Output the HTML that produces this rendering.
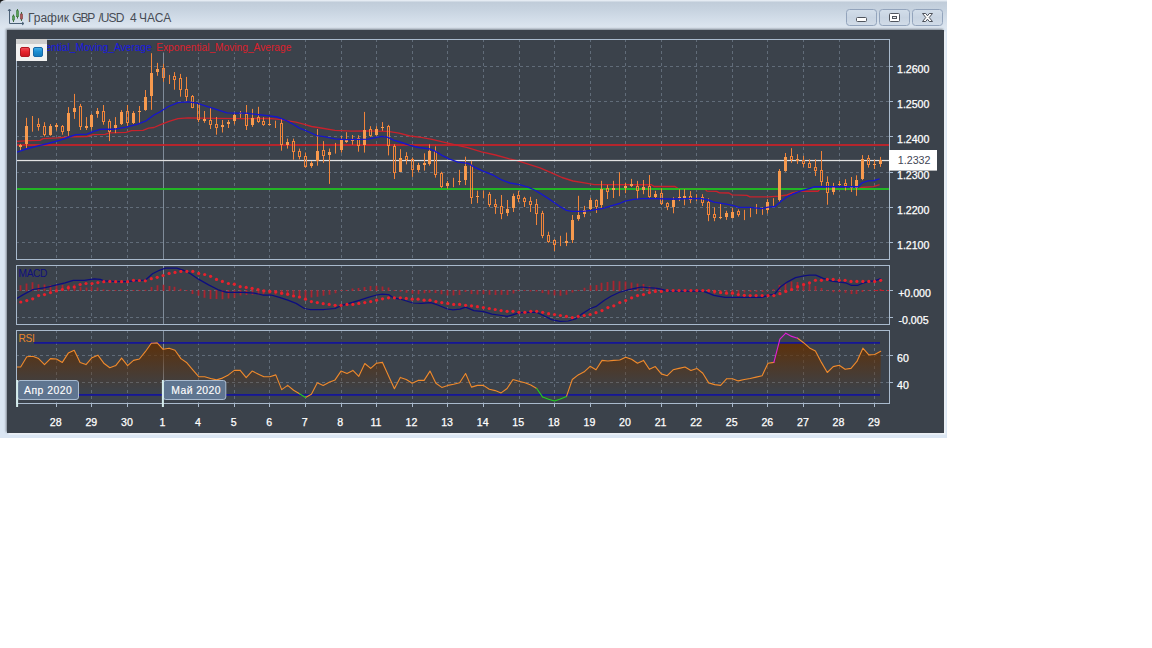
<!DOCTYPE html>
<html><head><meta charset="utf-8"><title>График GBP/USD</title>
<style>
html,body{margin:0;padding:0;background:#fff;width:1152px;height:648px;overflow:hidden;font-family:"Liberation Sans",sans-serif}
#win{position:absolute;left:0;top:0;width:947px;height:438px;background:linear-gradient(180deg,#e8eef5 0,#e2e9f1 1px,#c0ccd9 2px,#c6d2df 9px,#d1dce8 18px,#dde6f0 28px,#dbe6f3 31px,#dbe6f3 100%);border-radius:6px 0 0 0 / 4px 0 0 0;}
#corner{position:absolute;left:0;top:0;width:8px;height:6px;background:#141414}
#dark{position:absolute;left:7px;top:30px;width:936.5px;height:402.5px;background:#3b424b;box-shadow:-1px -1px 2px 0 rgba(60,66,74,.6), 1.5px 1.5px 0 0 #f4f8fc}
#title span{position:absolute;top:11.2px;font-size:12px;line-height:14px;color:#474c55;white-space:pre}
.btn{position:absolute;top:9px;height:15px;width:29px;border:1px solid #9aa6b5;border-radius:3px;background:linear-gradient(180deg,#dfe6ee,#c9d3de)}
</style></head><body>
<div id="corner"></div>
<div id="win"></div>
<div id="dark"></div>
<div id="title">
<span style="left:27.9px">График</span><span style="left:72.3px;letter-spacing:-1.2px">GBP</span><span style="left:98.4px;letter-spacing:-0.9px">/USD</span><span style="left:130px">4</span><span style="left:139px">ЧАСА</span>
</div>
<svg width="110" height="30" viewBox="840 0 110 30" style="position:absolute;left:840px;top:0">
<defs><linearGradient id="bg1" x1="0" y1="0" x2="0" y2="1"><stop offset="0" stop-color="#d3deea"/><stop offset="0.5" stop-color="#c8d4e2"/><stop offset="1" stop-color="#d2dce8"/></linearGradient></defs>
<g fill="url(#bg1)" stroke="#93a4bc" stroke-width="1">
<rect x="846.5" y="9.5" width="30" height="16" rx="3"/><rect x="879.5" y="9.5" width="30" height="16" rx="3"/><rect x="912.5" y="9.5" width="30" height="16" rx="3"/></g>
<rect x="856.5" y="17.5" width="10" height="4" rx="1" fill="#fff" stroke="#50555e" stroke-width="1"/>
<rect x="889.5" y="13.5" width="10" height="8" rx="1" fill="#fff" stroke="#50555e" stroke-width="1"/>
<rect x="892.5" y="16.5" width="4" height="2" fill="#e8e8e8" stroke="#50555e" stroke-width="1"/>
<path d="M922.5 13.5h3.2l1.8 2.3 1.8-2.3h3.2l-3.3 4 3.3 4h-3.2l-1.8-2.3-1.8 2.3h-3.2l3.3-4z" fill="#fff" stroke="#4c515a" stroke-width="1" stroke-linejoin="round"/>
</svg>
<svg width="20" height="20" viewBox="6 7 20 20" style="position:absolute;left:6px;top:7px">
<path d="M9.5 9.5V23.5H23.5" fill="none" stroke="#4a6076" stroke-width="1"/>
<path d="M8 11l1.5-2 1.5 2M22 22l2 1.5-2 1.5" fill="none" stroke="#4a6076" stroke-width="1"/>
<path d="M13.5 14.5V22M17.5 9V18.5M21.5 12V21" stroke="#3c6a3c" stroke-width="1" fill="none"/>
<rect x="12.5" y="16" width="2" height="4" fill="#58a058" stroke="#3a7a3a" stroke-width="0.6"/>
<rect x="16.5" y="10.7" width="2" height="6" fill="#58a058" stroke="#3a7a3a" stroke-width="0.6"/>
<rect x="20.5" y="14" width="2" height="5" fill="#b05858" stroke="#7a3a3a" stroke-width="0.6"/>
</svg>
<svg width="1152" height="648" viewBox="0 0 1152 648" style="position:absolute;left:0;top:0" font-family="Liberation Sans, sans-serif">
<defs>
<linearGradient id="rsifill" gradientUnits="userSpaceOnUse" x1="0" y1="343" x2="0" y2="393"><stop offset="0" stop-color="#603006" stop-opacity="0.92"/><stop offset="1" stop-color="#603006" stop-opacity="0"/></linearGradient>
<clipPath id="cm"><rect x="17" y="40" width="872" height="219"/></clipPath>
<clipPath id="crsi"><rect x="17" y="343" width="872" height="60"/></clipPath>
</defs>
<path d="M56.5 39.0V259.0M91.5 39.0V259.0M127.5 39.0V259.0M198.5 39.0V259.0M234.5 39.0V259.0M269.5 39.0V259.0M305.5 39.0V259.0M341.5 39.0V259.0M376.5 39.0V259.0M412.5 39.0V259.0M447.5 39.0V259.0M483.5 39.0V259.0M519.5 39.0V259.0M554.5 39.0V259.0M590.5 39.0V259.0M625.5 39.0V259.0M661.5 39.0V259.0M696.5 39.0V259.0M732.5 39.0V259.0M767.5 39.0V259.0M803.5 39.0V259.0M839.5 39.0V259.0M874.5 39.0V259.0M56.5 265.0V324.0M91.5 265.0V324.0M127.5 265.0V324.0M198.5 265.0V324.0M234.5 265.0V324.0M269.5 265.0V324.0M305.5 265.0V324.0M341.5 265.0V324.0M376.5 265.0V324.0M412.5 265.0V324.0M447.5 265.0V324.0M483.5 265.0V324.0M519.5 265.0V324.0M554.5 265.0V324.0M590.5 265.0V324.0M625.5 265.0V324.0M661.5 265.0V324.0M696.5 265.0V324.0M732.5 265.0V324.0M767.5 265.0V324.0M803.5 265.0V324.0M839.5 265.0V324.0M874.5 265.0V324.0M56.5 330.0V403.0M91.5 330.0V403.0M127.5 330.0V403.0M198.5 330.0V403.0M234.5 330.0V403.0M269.5 330.0V403.0M305.5 330.0V403.0M341.5 330.0V403.0M376.5 330.0V403.0M412.5 330.0V403.0M447.5 330.0V403.0M483.5 330.0V403.0M519.5 330.0V403.0M554.5 330.0V403.0M590.5 330.0V403.0M625.5 330.0V403.0M661.5 330.0V403.0M696.5 330.0V403.0M732.5 330.0V403.0M767.5 330.0V403.0M803.5 330.0V403.0M839.5 330.0V403.0M874.5 330.0V403.0" stroke="#616c79" stroke-width="1" stroke-dasharray="3 3" fill="none" shape-rendering="crispEdges"/>
<path d="M163.5 40V259M163.5 266V324M163.5 331V380" stroke="#808c9a" stroke-width="1" fill="none" shape-rendering="crispEdges"/>
<path d="M16 66.5H889M16 101.5H889M16 136.5H889M16 172.5H889M16 207.5H889M16 242.5H889M16 290.5H889M16 317.5H889M16 355.5H889M16 382.5H889" stroke="#616c79" stroke-width="1" stroke-dasharray="3 3" fill="none" shape-rendering="crispEdges"/>
<path d="M889 66.5H893M889 101.5H893M889 136.5H893M889 172.5H893M889 207.5H893M889 242.5H893M889 290.5H893M889 317.5H893M889 355.5H893M889 382.5H893" stroke="#a9bacd" stroke-width="1" fill="none" shape-rendering="crispEdges"/>
<!--MAIN-->
<g clip-path="url(#cm)">
<rect x="17" y="144.1" width="872" height="1.8" fill="#c4232a"/>
<polyline points="17.0,141.4 29.0,140.7 40.0,140.3 43.0,138.6 57.0,137.9 70.5,136.9 87.0,136.5 93.0,134.7 105.0,134.4 109.5,132.8 126.0,132.4 131.5,130.6 143.0,130.3 148.5,128.2 154.0,127.5 160.0,124.9 169.0,121.4 178.0,118.6 188.0,117.9 215.5,118.3 246.0,118.6 268.0,118.3 280.0,119.3 288.0,120.8 296.0,122.2 304.5,124.3 311.5,126.5 321.0,128.0 335.0,130.4 351.5,131.1 365.5,130.8 388.0,131.4 399.0,133.2 410.0,136.0 421.0,137.4 432.0,139.4 443.5,142.2 454.5,144.7 467.5,147.6 481.5,151.8 495.5,155.0 509.5,158.8 518.0,160.8 529.0,164.3 540.0,167.8 551.0,172.6 562.0,177.5 573.0,181.0 584.5,182.8 594.5,184.6 651.5,184.7 654.0,186.5 675.0,186.5 678.0,188.6 705.0,189.0 707.0,191.1 716.5,191.4 719.5,192.8 729.0,193.0 732.0,194.9 747.0,195.3 750.0,196.9 768.0,196.8 779.0,196.1 787.0,195.0 793.0,192.6 801.0,191.2 818.0,191.2 820.0,189.0 858.0,189.0 861.0,187.5 873.5,186.7 879.6,184.7" fill="none" stroke="#c8222c" stroke-width="1.35" stroke-linejoin="round"/>
<rect x="17" y="188.1" width="872" height="1.8" fill="#22c322"/>
<rect x="17" y="159.9" width="872" height="1.25" fill="#e2e2e2"/>
<path d="M20.5 143.9V150.7M26.5 117.8V149.0M32.5 116.0V131.7M38.5 118.2V124.5M38.5 126.5V130.7M44.5 122.2V126.5M44.5 134.5V136.5M50.5 124.0V135.8M56.5 123.0V130.6M62.5 125.0V126.5M62.5 131.5V134.7M68.5 107.1V135.8M74.5 93.9V118.9M80.5 103.9V106.5M80.5 126.5V130.0M86.5 117.1V130.0M91.5 113.9V129.6M97.5 108.0V117.8M103.5 105.0V111.5M103.5 121.5V124.7M109.5 119.2V121.5M109.5 131.5V141.1M115.5 117.1V133.1M121.5 110.1V125.0M127.5 105.0V111.5M127.5 122.5V125.8M133.5 111.1V124.0M139.5 106.0V123.3M145.5 90.0V110.8M151.5 53.2V109.8M157.5 62.9V75.8M163.5 63.8V68.5M163.5 77.5V81.8M169.5 74.9V84.0M174.5 72.1V76.5M174.5 79.5V89.7M180.5 73.9V78.5M180.5 89.5V96.7M186.5 76.9V89.5M186.5 96.5V101.2M192.5 95.0V96.5M192.5 107.5V108.2M198.5 102.6V103.5M198.5 119.5V122.1M204.5 111.0V122.8M210.5 107.8V120.5M210.5 124.5V129.0M216.5 117.0V124.5M216.5 127.5V134.7M222.5 120.0V132.5M228.5 120.0V128.0M234.5 113.0V124.4M240.5 111.0V117.9M246.5 105.0V114.5M246.5 125.5V130.0M252.5 108.9V126.9M258.5 106.8V117.5M258.5 121.5V122.8M263.5 117.2V121.5M263.5 124.5V125.8M269.5 117.5V125.6M275.5 120.7V128.0M281.5 118.0V123.5M281.5 144.5V150.7M287.5 138.6V148.6M293.5 138.6V141.5M293.5 151.5V159.7M299.5 148.6V151.5M299.5 156.5V159.4M305.5 152.5V156.5M305.5 166.5V167.8M311.5 161.1V167.8M317.5 129.1V165.7M323.5 141.1V150.5M323.5 155.5V162.8M329.5 148.5V183.9M335.5 142.9V153.6M341.5 136.0V152.6M346.5 132.2V142.9M352.5 135.0V144.7M358.5 135.3V138.5M358.5 145.5V151.7M364.5 111.9V152.6M370.5 126.2V129.5M370.5 135.5V136.7M376.5 126.2V135.6M382.5 122.1V130.8M388.5 124.9V126.5M388.5 145.5V155.4M394.5 144.3V146.5M394.5 172.5V179.0M400.5 149.2V172.1M406.5 152.2V156.5M406.5 159.5V164.4M412.5 157.5V159.5M412.5 169.5V176.9M418.5 162.8V172.1M424.5 153.3V170.7M429.5 144.3V165.6M435.5 146.4V151.5M435.5 174.5V177.6M441.5 171.7V173.5M441.5 186.5V187.9M447.5 181.0V188.6M453.5 177.8V187.2M459.5 169.9V185.1M465.5 156.7V185.1M471.5 160.8V165.5M471.5 197.5V203.9M477.5 190.7V203.2M483.5 190.7V198.3M489.5 192.1V194.5M489.5 204.5V206.9M495.5 199.0V204.5M495.5 206.5V213.9M501.5 195.0V206.5M501.5 213.5V219.2M507.5 200.0V216.1M513.5 193.6V212.0M518.5 190.8V195.5M518.5 198.5V202.2M524.5 196.8V198.5M524.5 201.5V207.0M530.5 196.8V201.5M530.5 204.5V212.0M536.5 199.0V204.5M536.5 213.5V225.0M542.5 210.8V213.5M542.5 235.5V238.2M548.5 231.7V235.5M548.5 241.5V242.8M554.5 239.2V240.5M554.5 244.5V251.1M560.5 235.8V246.1M566.5 232.6V246.1M572.5 215.0V243.0M578.5 195.8V220.8M584.5 205.9V217.2M590.5 197.8V210.0M596.5 199.4V200.5M596.5 206.5V213.0M601.5 180.8V207.9M607.5 184.9V188.5M607.5 191.5V199.0M613.5 180.8V198.0M619.5 172.2V196.2M625.5 182.7V193.2M631.5 178.9V187.0M637.5 180.9V186.5M637.5 190.5V199.0M643.5 180.0V194.2M649.5 175.0V186.5M649.5 196.5V197.8M655.5 190.8V198.0M661.5 188.3V193.5M661.5 203.5V205.0M667.5 202.2V203.5M667.5 206.5V210.1M673.5 197.2V213.3M679.5 189.3V201.1M684.5 189.3V205.3M690.5 191.1V196.5M690.5 199.5V203.2M696.5 194.2V201.1M702.5 194.2V197.5M702.5 202.5V206.0M708.5 198.3V202.5M708.5 214.5V221.2M714.5 207.4V214.5M714.5 217.5V221.2M720.5 203.9V219.2M726.5 210.8V219.9M732.5 208.0V218.5M738.5 209.4V211.5M738.5 214.5V216.7M744.5 209.8V220.1M750.5 208.1V217.2M756.5 204.0V214.1M762.5 207.2V214.9M767.5 199.2V213.5M773.5 198.2V205.8M779.5 169.0V201.7M785.5 153.0V171.8M791.5 148.2V156.5M791.5 159.5V162.8M797.5 154.2V163.9M803.5 155.8V160.5M803.5 163.5V167.2M809.5 159.3V163.5M809.5 167.5V168.0M815.5 159.3V167.5M815.5 170.5V176.0M821.5 151.0V170.5M821.5 181.5V185.7M827.5 176.4V182.5M827.5 192.5V204.7M833.5 182.9V194.7M839.5 180.8V185.7M845.5 179.2V183.5M845.5 185.5V190.6M851.5 177.0V192.0M856.5 175.3V195.8M862.5 155.1V180.1M868.5 155.1V158.5M868.5 164.5V167.6M874.5 159.7V169.0M880.5 156.9V166.9" stroke="#f0843a" stroke-width="1" fill="none"/>
<g fill="#f79a4e"><rect x="19.0" y="145" width="3" height="2"/><rect x="25.0" y="126" width="3" height="18"/><rect x="49.0" y="126" width="3" height="9"/><rect x="55.0" y="125" width="3" height="2"/><rect x="67.0" y="113" width="3" height="18"/><rect x="73.0" y="108" width="3" height="4"/><rect x="85.0" y="126" width="3" height="2"/><rect x="90.0" y="115" width="3" height="12"/><rect x="96.0" y="111" width="3" height="3"/><rect x="114.0" y="125" width="3" height="3"/><rect x="120.0" y="112" width="3" height="12"/><rect x="132.0" y="113" width="3" height="10"/><rect x="138.0" y="111" width="3" height="1"/><rect x="144.0" y="97" width="3" height="13"/><rect x="150.0" y="73" width="3" height="23"/><rect x="156.0" y="69" width="3" height="3"/><rect x="203.0" y="119" width="3" height="2"/><rect x="221.0" y="125" width="3" height="2"/><rect x="227.0" y="122" width="3" height="2"/><rect x="233.0" y="115" width="3" height="6"/><rect x="239.0" y="113" width="3" height="1"/><rect x="251.0" y="118" width="3" height="7"/><rect x="268.0" y="124" width="3" height="1"/><rect x="286.0" y="142" width="3" height="3"/><rect x="310.0" y="163" width="3" height="3"/><rect x="316.0" y="151" width="3" height="10"/><rect x="328.0" y="152" width="3" height="3"/><rect x="340.0" y="140" width="3" height="10"/><rect x="345.0" y="139" width="3" height="3"/><rect x="351.0" y="139" width="3" height="2"/><rect x="363.0" y="130" width="3" height="15"/><rect x="375.0" y="129" width="3" height="6"/><rect x="381.0" y="127" width="3" height="1"/><rect x="399.0" y="158" width="3" height="14"/><rect x="417.0" y="165" width="3" height="5"/><rect x="423.0" y="163" width="3" height="2"/><rect x="428.0" y="151" width="3" height="13"/><rect x="446.0" y="183" width="3" height="3"/><rect x="458.0" y="181" width="3" height="1"/><rect x="464.0" y="166" width="3" height="14"/><rect x="476.0" y="196" width="3" height="1"/><rect x="506.0" y="209" width="3" height="4"/><rect x="512.0" y="196" width="3" height="12"/><rect x="565.0" y="241" width="3" height="2"/><rect x="571.0" y="220" width="3" height="20"/><rect x="577.0" y="215" width="3" height="4"/><rect x="583.0" y="210" width="3" height="4"/><rect x="589.0" y="200" width="3" height="9"/><rect x="600.0" y="189" width="3" height="16"/><rect x="612.0" y="188" width="3" height="2"/><rect x="624.0" y="186" width="3" height="2"/><rect x="630.0" y="184" width="3" height="2"/><rect x="642.0" y="187" width="3" height="3"/><rect x="654.0" y="194" width="3" height="3"/><rect x="672.0" y="200" width="3" height="7"/><rect x="678.0" y="197" width="3" height="1"/><rect x="683.0" y="196" width="3" height="2"/><rect x="719.0" y="217" width="3" height="1"/><rect x="725.0" y="213" width="3" height="4"/><rect x="731.0" y="212" width="3" height="6"/><rect x="766.0" y="202" width="3" height="8"/><rect x="778.0" y="171" width="3" height="29"/><rect x="784.0" y="157" width="3" height="14"/><rect x="796.0" y="159" width="3" height="2"/><rect x="832.0" y="187" width="3" height="5"/><rect x="838.0" y="184" width="3" height="1"/><rect x="850.0" y="187" width="3" height="1"/><rect x="855.0" y="180" width="3" height="8"/><rect x="861.0" y="159" width="3" height="20"/><rect x="873.0" y="164" width="3" height="1"/><rect x="879.0" y="160" width="3" height="4"/></g>
<g fill="none" stroke="#f0843a" stroke-width="1"><rect x="37.5" y="124.5" width="2" height="2"/><rect x="43.5" y="126.5" width="2" height="8"/><rect x="61.5" y="126.5" width="2" height="5"/><rect x="79.5" y="106.5" width="2" height="20"/><rect x="102.5" y="111.5" width="2" height="10"/><rect x="108.5" y="121.5" width="2" height="10"/><rect x="126.5" y="111.5" width="2" height="11"/><rect x="162.5" y="68.5" width="2" height="9"/><rect x="173.5" y="76.5" width="2" height="3"/><rect x="179.5" y="78.5" width="2" height="11"/><rect x="185.5" y="89.5" width="2" height="7"/><rect x="191.5" y="96.5" width="2" height="11"/><rect x="197.5" y="103.5" width="2" height="16"/><rect x="209.5" y="120.5" width="2" height="4"/><rect x="215.5" y="124.5" width="2" height="3"/><rect x="245.5" y="114.5" width="2" height="11"/><rect x="257.5" y="117.5" width="2" height="4"/><rect x="262.5" y="121.5" width="2" height="3"/><rect x="280.5" y="123.5" width="2" height="21"/><rect x="292.5" y="141.5" width="2" height="10"/><rect x="298.5" y="151.5" width="2" height="5"/><rect x="304.5" y="156.5" width="2" height="10"/><rect x="322.5" y="150.5" width="2" height="5"/><rect x="357.5" y="138.5" width="2" height="7"/><rect x="369.5" y="129.5" width="2" height="6"/><rect x="387.5" y="126.5" width="2" height="19"/><rect x="393.5" y="146.5" width="2" height="26"/><rect x="405.5" y="156.5" width="2" height="3"/><rect x="411.5" y="159.5" width="2" height="10"/><rect x="434.5" y="151.5" width="2" height="23"/><rect x="440.5" y="173.5" width="2" height="13"/><rect x="470.5" y="165.5" width="2" height="32"/><rect x="488.5" y="194.5" width="2" height="10"/><rect x="494.5" y="204.5" width="2" height="2"/><rect x="500.5" y="206.5" width="2" height="7"/><rect x="517.5" y="195.5" width="2" height="3"/><rect x="523.5" y="198.5" width="2" height="3"/><rect x="529.5" y="201.5" width="2" height="3"/><rect x="535.5" y="204.5" width="2" height="9"/><rect x="541.5" y="213.5" width="2" height="22"/><rect x="547.5" y="235.5" width="2" height="6"/><rect x="553.5" y="240.5" width="2" height="4"/><rect x="595.5" y="200.5" width="2" height="6"/><rect x="606.5" y="188.5" width="2" height="3"/><rect x="636.5" y="186.5" width="2" height="4"/><rect x="648.5" y="186.5" width="2" height="10"/><rect x="660.5" y="193.5" width="2" height="10"/><rect x="666.5" y="203.5" width="2" height="3"/><rect x="689.5" y="196.5" width="2" height="3"/><rect x="701.5" y="197.5" width="2" height="5"/><rect x="707.5" y="202.5" width="2" height="12"/><rect x="713.5" y="214.5" width="2" height="3"/><rect x="737.5" y="211.5" width="2" height="3"/><rect x="790.5" y="156.5" width="2" height="3"/><rect x="802.5" y="160.5" width="2" height="3"/><rect x="808.5" y="163.5" width="2" height="4"/><rect x="814.5" y="167.5" width="2" height="3"/><rect x="820.5" y="170.5" width="2" height="11"/><rect x="826.5" y="182.5" width="2" height="10"/><rect x="844.5" y="183.5" width="2" height="2"/><rect x="867.5" y="158.5" width="2" height="6"/></g>
<polyline points="17.0,152.2 26.0,149.0 37.0,146.2 48.0,143.5 59.5,140.3 70.5,136.5 76.0,134.7 87.0,134.2 93.0,131.7 101.0,129.2 115.0,129.2 126.0,127.2 137.0,124.4 145.5,121.2 154.0,115.0 160.0,111.8 168.5,106.5 178.0,102.6 188.0,101.8 197.0,103.2 206.0,106.1 215.5,109.1 227.0,112.8 235.0,113.1 246.0,113.1 257.0,114.5 268.0,115.7 277.0,117.0 282.0,118.8 288.0,121.3 293.5,124.5 299.0,127.8 304.5,130.2 310.0,132.5 317.0,135.6 324.0,136.7 335.0,138.8 346.0,139.7 357.0,139.4 368.0,139.2 376.5,137.4 382.0,136.4 388.0,137.4 393.5,140.1 401.5,142.5 410.0,145.3 418.5,147.5 429.5,148.9 435.0,151.2 442.0,155.4 449.0,158.8 458.0,162.2 468.0,163.3 474.5,167.1 483.0,171.2 493.0,175.0 501.0,179.6 510.0,183.0 519.5,184.7 528.0,187.2 534.5,190.0 541.5,194.2 548.5,198.6 555.5,203.5 561.0,207.2 566.5,210.4 572.0,211.4 583.0,211.4 591.5,210.4 603.0,208.3 611.0,205.8 619.5,203.5 625.0,201.1 633.5,199.4 642.0,198.6 655.5,198.6 667.0,199.0 678.0,199.0 689.0,198.6 700.0,198.3 708.5,200.0 714.0,202.2 725.0,203.9 733.5,205.6 739.0,207.4 750.0,207.4 762.0,208.6 768.0,207.2 775.0,206.5 780.5,201.7 787.0,196.8 793.0,194.0 801.0,190.8 809.5,188.5 815.0,186.7 830.0,186.7 858.0,186.7 862.0,182.9 868.0,180.8 873.5,180.6 879.6,178.8" fill="none" stroke="#1616cc" stroke-width="1.35" stroke-linejoin="round"/>
</g>
<!--MACD-->
<path d="M20.5 285.2V291.0M26.5 283.5V291.0M32.5 282.3V291.0M38.5 284.3V291.0M44.5 284.4V291.0M50.5 285.0V291.0M56.5 285.2V291.0M62.5 285.1V291.0M68.5 285.2V291.0M74.5 284.5V291.0M80.5 286.7V291.0M86.5 287.4V291.0M91.5 286.6V291.0M97.5 287.4V291.0M103.5 289.6V291.0M109.5 290.0V291.0M115.5 290.0V291.0M121.5 290.0V291.0M127.5 290.0V291.0M133.5 290.0V291.0M139.5 290.0V291.0M145.5 289.8V291.0M151.5 287.1V291.0M157.5 285.2V291.0M163.5 284.7V291.0M169.5 285.9V291.0M174.5 286.8V291.0M180.5 288.8V291.0M186.5 290.0V291.0M192.5 290.0V294.0M198.5 290.0V295.8M204.5 290.0V297.8M210.5 290.0V299.1M216.5 290.0V299.0M222.5 290.0V299.2M228.5 290.0V298.4M234.5 290.0V297.8M240.5 290.0V295.5M246.5 290.0V295.1M252.5 290.0V294.7M258.5 290.0V294.6M263.5 290.0V294.2M269.5 290.0V293.7M275.5 290.0V294.5M281.5 290.0V294.9M287.5 290.0V295.9M293.5 290.0V296.3M299.5 290.0V298.2M305.5 290.0V299.0M311.5 290.0V297.6M317.5 290.0V296.7M323.5 290.0V295.7M329.5 290.0V294.7M335.5 290.0V293.3M341.5 290.0V291.0M346.5 290.0V291.0M352.5 288.6V291.0M358.5 287.9V291.0M364.5 286.9V291.0M370.5 286.1V291.0M376.5 285.8V291.0M382.5 286.4V291.0M388.5 287.6V291.0M394.5 290.0V291.0M400.5 290.0V291.8M406.5 290.0V292.8M412.5 290.0V293.7M418.5 290.0V294.2M424.5 290.0V293.2M429.5 290.0V292.7M435.5 290.0V293.0M441.5 290.0V294.2M447.5 290.0V295.6M453.5 290.0V295.4M459.5 290.0V294.9M465.5 290.0V292.1M471.5 290.0V294.0M477.5 290.0V294.4M483.5 290.0V294.2M489.5 290.0V294.8M495.5 290.0V295.1M501.5 290.0V294.8M507.5 290.0V295.1M513.5 290.0V293.6M518.5 290.0V291.0M524.5 290.0V291.0M530.5 290.0V291.4M536.5 290.0V291.5M542.5 290.0V293.1M548.5 290.0V294.4M554.5 290.0V295.6M560.5 290.0V295.8M566.5 290.0V294.7M572.5 290.0V292.5M578.5 290.0V291.0M584.5 287.8V291.0M590.5 285.3V291.0M596.5 284.9V291.0M601.5 282.8V291.0M607.5 281.9V291.0M613.5 280.7V291.0M619.5 281.2V291.0M625.5 281.4V291.0M631.5 282.6V291.0M637.5 283.5V291.0M643.5 283.9V291.0M649.5 286.2V291.0M655.5 287.5V291.0M661.5 288.5V291.0M667.5 290.0V291.0M673.5 290.0V291.0M679.5 290.0V291.1M684.5 290.0V291.1M690.5 290.0V291.1M696.5 290.0V291.1M702.5 290.0V291.1M708.5 290.0V293.1M714.5 290.0V294.1M720.5 290.0V294.1M726.5 290.0V294.2M732.5 290.0V294.2M738.5 290.0V293.0M744.5 290.0V292.4M750.5 290.0V292.1M756.5 290.0V292.1M762.5 290.0V292.1M767.5 290.0V291.0M773.5 289.2V291.0M779.5 285.0V291.0M785.5 283.0V291.0M791.5 281.6V291.0M797.5 281.9V291.0M803.5 282.8V291.0M809.5 283.7V291.0M815.5 285.9V291.0M821.5 288.1V291.0M827.5 290.0V291.0M833.5 290.0V292.3M839.5 290.0V292.0M845.5 290.0V292.7M851.5 290.0V294.0M856.5 290.0V294.0M862.5 290.0V292.0M868.5 290.0V291.0M874.5 290.0V291.0M880.5 289.1V291.0" stroke="#bc202c" stroke-width="1.8" fill="none" opacity="0.85"/>
<path d="M875 290.5H889" stroke="#c41f2b" stroke-width="1" stroke-dasharray="3 3" fill="none" shape-rendering="crispEdges"/>
<polyline points="16.4,298.8 23.3,294.6 33.0,289.5 45.5,287.7 56.7,284.9 65.0,282.8 73.3,280.3 84.4,280.3 94.2,278.9 100.4,279.4 103.9,280.8 112.2,281.4 126.1,281.7 134.4,280.8 145.5,280.0 152.5,273.8 159.4,270.3 165.5,268.2 176.7,268.2 183.6,270.3 190.5,273.8 198.9,279.4 208.6,284.9 218.3,289.8 226.7,292.3 243.3,292.3 254.4,293.2 262.8,295.0 271.1,295.0 279.4,297.4 287.8,300.2 296.1,303.4 304.4,308.5 310.0,309.5 324.0,309.5 335.0,308.5 342.0,305.3 351.7,302.6 360.0,300.2 368.3,297.4 376.7,295.0 382.2,294.2 388.5,294.6 393.3,297.8 401.7,299.5 412.8,303.0 421.1,303.4 430.8,302.6 437.8,305.0 447.5,309.0 453.0,309.9 460.0,309.2 465.6,307.1 473.9,310.6 483.6,311.7 492.0,314.1 501.7,315.5 507.2,316.4 512.8,314.8 519.7,312.7 529.4,312.3 536.4,312.3 543.3,315.5 551.7,319.6 560.0,321.4 568.3,321.0 575.3,319.0 582.2,313.7 590.5,308.5 596.1,306.4 604.4,300.2 611.0,296.2 618.9,292.5 627.8,289.8 636.1,288.1 641.7,287.0 647.2,287.7 655.5,288.1 661.1,289.1 666.7,290.9 677.8,291.2 702.8,291.2 708.3,293.2 713.9,295.3 725.0,297.4 740.0,297.4 762.2,297.4 767.8,295.3 774.7,294.0 780.3,287.0 787.2,282.1 795.5,277.6 803.9,275.9 809.4,275.2 815.7,275.2 823.3,278.4 831.7,281.2 840.0,282.1 845.5,282.8 851.1,285.3 858.0,285.3 863.6,282.8 869.2,281.4 874.7,280.8 880.7,278.7" fill="none" stroke="#0d0d80" stroke-width="1.25" stroke-linejoin="round"/>
<g fill="#e8202c"><circle cx="20.8" cy="302.0" r="1.6"/><circle cx="26.8" cy="300.6" r="1.6"/><circle cx="32.7" cy="298.8" r="1.6"/><circle cx="38.6" cy="295.6" r="1.6"/><circle cx="44.5" cy="294.6" r="1.6"/><circle cx="50.5" cy="292.6" r="1.6"/><circle cx="56.4" cy="290.9" r="1.6"/><circle cx="62.3" cy="289.5" r="1.6"/><circle cx="68.3" cy="287.7" r="1.6"/><circle cx="74.2" cy="287.0" r="1.6"/><circle cx="80.1" cy="284.5" r="1.6"/><circle cx="86.0" cy="283.5" r="1.6"/><circle cx="92.0" cy="283.5" r="1.6"/><circle cx="97.9" cy="282.6" r="1.6"/><circle cx="103.8" cy="281.7" r="1.6"/><circle cx="109.8" cy="281.4" r="1.6"/><circle cx="115.7" cy="281.7" r="1.6"/><circle cx="121.6" cy="281.7" r="1.6"/><circle cx="127.6" cy="281.7" r="1.6"/><circle cx="133.5" cy="280.3" r="1.6"/><circle cx="139.4" cy="280.5" r="1.6"/><circle cx="145.3" cy="280.8" r="1.6"/><circle cx="151.3" cy="278.7" r="1.6"/><circle cx="157.2" cy="277.3" r="1.6"/><circle cx="163.1" cy="275.5" r="1.6"/><circle cx="169.1" cy="273.4" r="1.6"/><circle cx="175.0" cy="272.4" r="1.6"/><circle cx="180.9" cy="271.4" r="1.6"/><circle cx="186.9" cy="271.4" r="1.6"/><circle cx="192.8" cy="271.4" r="1.6"/><circle cx="198.7" cy="273.4" r="1.6"/><circle cx="204.7" cy="274.5" r="1.6"/><circle cx="210.6" cy="276.3" r="1.6"/><circle cx="216.5" cy="279.4" r="1.6"/><circle cx="222.4" cy="281.4" r="1.6"/><circle cx="228.4" cy="283.5" r="1.6"/><circle cx="234.3" cy="284.2" r="1.6"/><circle cx="240.2" cy="286.7" r="1.6"/><circle cx="246.2" cy="287.4" r="1.6"/><circle cx="252.1" cy="288.4" r="1.6"/><circle cx="258.0" cy="289.5" r="1.6"/><circle cx="263.9" cy="290.9" r="1.6"/><circle cx="269.9" cy="291.4" r="1.6"/><circle cx="275.8" cy="291.9" r="1.6"/><circle cx="281.7" cy="293.2" r="1.6"/><circle cx="287.7" cy="294.2" r="1.6"/><circle cx="293.6" cy="296.0" r="1.6"/><circle cx="299.5" cy="297.0" r="1.6"/><circle cx="305.5" cy="299.2" r="1.6"/><circle cx="311.4" cy="301.6" r="1.6"/><circle cx="317.3" cy="302.6" r="1.6"/><circle cx="323.2" cy="303.7" r="1.6"/><circle cx="329.2" cy="304.4" r="1.6"/><circle cx="335.1" cy="305.3" r="1.6"/><circle cx="341.0" cy="305.3" r="1.6"/><circle cx="347.0" cy="304.4" r="1.6"/><circle cx="352.9" cy="304.4" r="1.6"/><circle cx="358.8" cy="303.4" r="1.6"/><circle cx="364.8" cy="302.6" r="1.6"/><circle cx="370.7" cy="301.6" r="1.6"/><circle cx="376.6" cy="300.2" r="1.6"/><circle cx="382.5" cy="298.8" r="1.6"/><circle cx="388.5" cy="297.8" r="1.6"/><circle cx="394.4" cy="297.8" r="1.6"/><circle cx="400.3" cy="297.8" r="1.6"/><circle cx="406.3" cy="298.4" r="1.6"/><circle cx="412.2" cy="299.2" r="1.6"/><circle cx="418.1" cy="299.2" r="1.6"/><circle cx="424.1" cy="300.2" r="1.6"/><circle cx="430.0" cy="300.2" r="1.6"/><circle cx="435.9" cy="301.6" r="1.6"/><circle cx="441.8" cy="302.6" r="1.6"/><circle cx="447.8" cy="303.4" r="1.6"/><circle cx="453.7" cy="304.4" r="1.6"/><circle cx="459.6" cy="304.4" r="1.6"/><circle cx="465.6" cy="305.3" r="1.6"/><circle cx="471.5" cy="305.8" r="1.6"/><circle cx="477.4" cy="306.7" r="1.6"/><circle cx="483.4" cy="307.6" r="1.6"/><circle cx="489.3" cy="308.5" r="1.6"/><circle cx="495.2" cy="309.5" r="1.6"/><circle cx="501.1" cy="310.6" r="1.6"/><circle cx="507.1" cy="311.3" r="1.6"/><circle cx="513.0" cy="311.3" r="1.6"/><circle cx="518.9" cy="312.3" r="1.6"/><circle cx="524.9" cy="312.3" r="1.6"/><circle cx="530.8" cy="311.3" r="1.6"/><circle cx="536.7" cy="311.3" r="1.6"/><circle cx="542.7" cy="312.3" r="1.6"/><circle cx="548.6" cy="313.7" r="1.6"/><circle cx="554.5" cy="314.5" r="1.6"/><circle cx="560.4" cy="315.5" r="1.6"/><circle cx="566.4" cy="316.4" r="1.6"/><circle cx="572.3" cy="317.6" r="1.6"/><circle cx="578.2" cy="316.4" r="1.6"/><circle cx="584.2" cy="315.5" r="1.6"/><circle cx="590.1" cy="314.5" r="1.6"/><circle cx="596.0" cy="312.7" r="1.6"/><circle cx="602.0" cy="310.6" r="1.6"/><circle cx="607.9" cy="307.6" r="1.6"/><circle cx="613.8" cy="305.8" r="1.6"/><circle cx="619.8" cy="302.6" r="1.6"/><circle cx="625.7" cy="300.6" r="1.6"/><circle cx="631.6" cy="297.8" r="1.6"/><circle cx="637.5" cy="295.6" r="1.6"/><circle cx="643.5" cy="294.6" r="1.6"/><circle cx="649.4" cy="292.6" r="1.6"/><circle cx="655.3" cy="291.4" r="1.6"/><circle cx="661.3" cy="291.4" r="1.6"/><circle cx="667.2" cy="290.5" r="1.6"/><circle cx="673.1" cy="290.5" r="1.6"/><circle cx="679.0" cy="290.5" r="1.6"/><circle cx="685.0" cy="290.5" r="1.6"/><circle cx="690.9" cy="290.5" r="1.6"/><circle cx="696.8" cy="290.5" r="1.6"/><circle cx="702.8" cy="290.5" r="1.6"/><circle cx="708.7" cy="290.5" r="1.6"/><circle cx="714.6" cy="291.4" r="1.6"/><circle cx="720.6" cy="292.6" r="1.6"/><circle cx="726.5" cy="293.2" r="1.6"/><circle cx="732.4" cy="293.2" r="1.6"/><circle cx="738.3" cy="294.6" r="1.6"/><circle cx="744.3" cy="295.3" r="1.6"/><circle cx="750.2" cy="295.6" r="1.6"/><circle cx="756.1" cy="295.6" r="1.6"/><circle cx="762.1" cy="295.6" r="1.6"/><circle cx="768.0" cy="295.6" r="1.6"/><circle cx="773.9" cy="295.6" r="1.6"/><circle cx="779.9" cy="293.7" r="1.6"/><circle cx="785.8" cy="291.4" r="1.6"/><circle cx="791.7" cy="289.5" r="1.6"/><circle cx="797.6" cy="286.7" r="1.6"/><circle cx="803.6" cy="284.5" r="1.6"/><circle cx="809.5" cy="282.8" r="1.6"/><circle cx="815.4" cy="280.3" r="1.6"/><circle cx="821.4" cy="280.3" r="1.6"/><circle cx="827.3" cy="279.4" r="1.6"/><circle cx="833.2" cy="279.4" r="1.6"/><circle cx="839.2" cy="280.3" r="1.6"/><circle cx="845.1" cy="280.3" r="1.6"/><circle cx="851.0" cy="281.4" r="1.6"/><circle cx="856.9" cy="281.4" r="1.6"/><circle cx="862.9" cy="281.4" r="1.6"/><circle cx="868.8" cy="281.4" r="1.6"/><circle cx="874.7" cy="281.4" r="1.6"/><circle cx="880.7" cy="280.3" r="1.6"/></g>
<text x="18.5" y="277" fill="#10107e" font-size="10.2" letter-spacing="-0.35">MACD</text>
<!--RSI-->
<path d="M16.6 396L16.6 367.0L20.8 366.8L26.8 356.8L32.7 356.3L38.6 358.6L44.5 364.6L50.5 358.6L56.4 359.0L62.3 362.4L68.3 353.1L74.2 350.3L80.1 362.4L86.0 364.6L92.0 357.7L97.9 355.2L103.8 363.2L109.8 367.7L115.7 365.6L121.6 358.2L127.6 365.6L133.5 360.4L139.4 359.0L145.3 351.7L151.3 343.2L157.2 342.9L163.1 349.3L169.1 348.2L175.0 350.3L180.9 358.6L186.9 362.8L192.8 369.8L198.7 376.7L204.7 376.7L210.6 378.5L216.5 379.9L222.4 378.1L228.4 374.9L234.3 370.4L240.2 370.4L246.2 377.7L252.1 371.1L258.0 373.9L263.9 376.7L269.9 376.7L275.8 374.9L281.7 389.6L287.7 385.4L293.6 390.2L299.5 393.8L305.5 397.5L311.4 394.3L317.3 382.7L323.2 385.4L329.2 382.2L335.1 379.9L341.0 371.1L347.0 373.5L352.9 370.4L358.8 376.3L364.8 363.5L370.7 368.4L376.6 363.2L382.5 362.4L388.5 375.7L394.4 388.8L400.3 377.4L406.3 379.5L412.2 383.2L418.1 380.4L424.1 380.4L430.0 371.1L435.9 383.2L441.8 387.4L447.8 385.4L453.7 384.3L459.6 382.7L465.6 373.5L471.5 387.1L477.4 385.4L483.4 385.4L489.3 389.2L495.2 390.6L501.1 392.9L507.1 388.5L513.0 379.5L518.9 381.3L524.9 382.7L530.8 385.0L536.7 388.5L542.7 397.1L548.6 399.3L554.5 401.0L560.4 398.9L566.4 396.6L572.3 379.5L578.2 374.9L584.2 371.8L590.1 366.3L596.0 369.8L602.0 360.4L607.9 361.0L613.8 360.4L619.8 360.0L625.7 357.2L631.6 359.3L637.5 363.2L643.5 360.4L649.4 369.3L655.3 366.6L661.3 373.9L667.2 375.7L673.1 369.8L679.0 368.4L685.0 367.0L690.9 370.4L696.8 368.4L702.8 373.2L708.7 382.9L714.6 384.6L720.6 385.4L726.5 378.8L732.4 378.8L738.3 380.9L744.3 379.5L750.2 378.5L756.1 377.1L762.1 375.7L768.0 363.2L773.9 362.4L779.9 339.2L785.8 333.2L791.7 336.4L797.6 338.2L803.6 342.7L809.5 347.9L815.4 351.0L821.4 362.4L827.3 372.5L833.2 366.6L839.2 365.2L845.1 369.3L851.0 368.4L856.9 361.4L862.9 348.2L868.8 354.9L874.7 354.5L880.7 351.3L880.7 396Z" fill="url(#rsifill)" clip-path="url(#crsi)"/>
<rect x="17" y="342.1" width="863" height="1.6" fill="#1212a0"/>
<rect x="17" y="394.1" width="863" height="1.6" fill="#1212a0"/>
<path d="M16.6 367.0L20.8 366.8M20.8 366.8L26.8 356.8M26.8 356.8L32.7 356.3M32.7 356.3L38.6 358.6M38.6 358.6L44.5 364.6M44.5 364.6L50.5 358.6M50.5 358.6L56.4 359.0M56.4 359.0L62.3 362.4M62.3 362.4L68.3 353.1M68.3 353.1L74.2 350.3M74.2 350.3L80.1 362.4M80.1 362.4L86.0 364.6M86.0 364.6L92.0 357.7M92.0 357.7L97.9 355.2M97.9 355.2L103.8 363.2M103.8 363.2L109.8 367.7M109.8 367.7L115.7 365.6M115.7 365.6L121.6 358.2M121.6 358.2L127.6 365.6M127.6 365.6L133.5 360.4M133.5 360.4L139.4 359.0M139.4 359.0L145.3 351.7M145.3 351.7L151.3 343.2M151.3 343.2L157.2 342.9M157.2 342.9L163.1 349.3M163.1 349.3L169.1 348.2M169.1 348.2L175.0 350.3M175.0 350.3L180.9 358.6M180.9 358.6L186.9 362.8M186.9 362.8L192.8 369.8M192.8 369.8L198.7 376.7M198.7 376.7L204.7 376.7M204.7 376.7L210.6 378.5M210.6 378.5L216.5 379.9M216.5 379.9L222.4 378.1M222.4 378.1L228.4 374.9M228.4 374.9L234.3 370.4M234.3 370.4L240.2 370.4M240.2 370.4L246.2 377.7M246.2 377.7L252.1 371.1M252.1 371.1L258.0 373.9M258.0 373.9L263.9 376.7M263.9 376.7L269.9 376.7M269.9 376.7L275.8 374.9M275.8 374.9L281.7 389.6M281.7 389.6L287.7 385.4M287.7 385.4L293.6 390.2M293.6 390.2L299.5 393.8M305.5 397.5L311.4 394.3M311.4 394.3L317.3 382.7M317.3 382.7L323.2 385.4M323.2 385.4L329.2 382.2M329.2 382.2L335.1 379.9M335.1 379.9L341.0 371.1M341.0 371.1L347.0 373.5M347.0 373.5L352.9 370.4M352.9 370.4L358.8 376.3M358.8 376.3L364.8 363.5M364.8 363.5L370.7 368.4M370.7 368.4L376.6 363.2M376.6 363.2L382.5 362.4M382.5 362.4L388.5 375.7M388.5 375.7L394.4 388.8M394.4 388.8L400.3 377.4M400.3 377.4L406.3 379.5M406.3 379.5L412.2 383.2M412.2 383.2L418.1 380.4M418.1 380.4L424.1 380.4M424.1 380.4L430.0 371.1M430.0 371.1L435.9 383.2M435.9 383.2L441.8 387.4M441.8 387.4L447.8 385.4M447.8 385.4L453.7 384.3M453.7 384.3L459.6 382.7M459.6 382.7L465.6 373.5M465.6 373.5L471.5 387.1M471.5 387.1L477.4 385.4M477.4 385.4L483.4 385.4M483.4 385.4L489.3 389.2M489.3 389.2L495.2 390.6M495.2 390.6L501.1 392.9M501.1 392.9L507.1 388.5M507.1 388.5L513.0 379.5M513.0 379.5L518.9 381.3M518.9 381.3L524.9 382.7M524.9 382.7L530.8 385.0M530.8 385.0L536.7 388.5M566.4 396.6L572.3 379.5M572.3 379.5L578.2 374.9M578.2 374.9L584.2 371.8M584.2 371.8L590.1 366.3M590.1 366.3L596.0 369.8M596.0 369.8L602.0 360.4M602.0 360.4L607.9 361.0M607.9 361.0L613.8 360.4M613.8 360.4L619.8 360.0M619.8 360.0L625.7 357.2M625.7 357.2L631.6 359.3M631.6 359.3L637.5 363.2M637.5 363.2L643.5 360.4M643.5 360.4L649.4 369.3M649.4 369.3L655.3 366.6M655.3 366.6L661.3 373.9M661.3 373.9L667.2 375.7M667.2 375.7L673.1 369.8M673.1 369.8L679.0 368.4M679.0 368.4L685.0 367.0M685.0 367.0L690.9 370.4M690.9 370.4L696.8 368.4M696.8 368.4L702.8 373.2M702.8 373.2L708.7 382.9M708.7 382.9L714.6 384.6M714.6 384.6L720.6 385.4M720.6 385.4L726.5 378.8M726.5 378.8L732.4 378.8M732.4 378.8L738.3 380.9M738.3 380.9L744.3 379.5M744.3 379.5L750.2 378.5M750.2 378.5L756.1 377.1M756.1 377.1L762.1 375.7M762.1 375.7L768.0 363.2M768.0 363.2L773.9 362.4M797.6 338.2L803.6 342.7M803.6 342.7L809.5 347.9M809.5 347.9L815.4 351.0M815.4 351.0L821.4 362.4M821.4 362.4L827.3 372.5M827.3 372.5L833.2 366.6M833.2 366.6L839.2 365.2M839.2 365.2L845.1 369.3M845.1 369.3L851.0 368.4M851.0 368.4L856.9 361.4M856.9 361.4L862.9 348.2M862.9 348.2L868.8 354.9M868.8 354.9L874.7 354.5M874.7 354.5L880.7 351.3" fill="none" stroke="#f08a2c" stroke-width="1.1" stroke-linecap="round"/>
<path d="M773.9 362.4L779.9 339.2M779.9 339.2L785.8 333.2M785.8 333.2L791.7 336.4M791.7 336.4L797.6 338.2" fill="none" stroke="#e020d8" stroke-width="1.1" stroke-linecap="round"/>
<path d="M299.5 393.8L305.5 397.5M536.7 388.5L542.7 397.1M542.7 397.1L548.6 399.3M548.6 399.3L554.5 401.0M554.5 401.0L560.4 398.9M560.4 398.9L566.4 396.6" fill="none" stroke="#22cc22" stroke-width="1.1" stroke-linecap="round"/>
<rect x="17" y="333" width="17" height="11" fill="#3b424b"/>
<text x="18.5" y="341.7" fill="#e8862a" font-size="10.2" letter-spacing="-0.3">RSI</text>
<rect x="16.5" y="39.5" width="873.0" height="220.0" fill="none" stroke="#a9bacd" stroke-width="1" shape-rendering="crispEdges"/>
<rect x="16.5" y="265.5" width="873.0" height="59.0" fill="none" stroke="#a9bacd" stroke-width="1" shape-rendering="crispEdges"/>
<rect x="16.5" y="330.5" width="873.0" height="73.0" fill="none" stroke="#a9bacd" stroke-width="1" shape-rendering="crispEdges"/>
<path d="M56.5 404V407M91.5 404V407M127.5 404V407M198.5 404V407M234.5 404V407M269.5 404V407M305.5 404V407M341.5 404V407M376.5 404V407M412.5 404V407M447.5 404V407M483.5 404V407M519.5 404V407M554.5 404V407M590.5 404V407M625.5 404V407M661.5 404V407M696.5 404V407M732.5 404V407M767.5 404V407M803.5 404V407M839.5 404V407M874.5 404V407" stroke="#a9bacd" stroke-width="1" fill="none" shape-rendering="crispEdges"/>
<text x="897" y="73" fill="#fff" font-size="10.6" text-anchor="start" stroke="#fff" stroke-width="0.25" >1.2600</text>
<text x="897" y="108" fill="#fff" font-size="10.6" text-anchor="start" stroke="#fff" stroke-width="0.25" >1.2500</text>
<text x="897" y="143" fill="#fff" font-size="10.6" text-anchor="start" stroke="#fff" stroke-width="0.25" >1.2400</text>
<text x="897" y="214" fill="#fff" font-size="10.6" text-anchor="start" stroke="#fff" stroke-width="0.25" >1.2200</text>
<text x="897" y="249" fill="#fff" font-size="10.6" text-anchor="start" stroke="#fff" stroke-width="0.25" >1.2100</text>
<text x="897" y="179" fill="#fff" font-size="10.6" text-anchor="start" stroke="#fff" stroke-width="0.25" >1.2300</text>
<text x="898.2" y="297" fill="#fff" font-size="10.6" text-anchor="start" stroke="#fff" stroke-width="0.25" >+0.000</text>
<text x="898.5" y="324" fill="#fff" font-size="10.6" text-anchor="start" stroke="#fff" stroke-width="0.25" >-0.005</text>
<text x="897" y="362" fill="#fff" font-size="10.6" text-anchor="start" stroke="#fff" stroke-width="0.25" >60</text>
<text x="897" y="389" fill="#fff" font-size="10.6" text-anchor="start" stroke="#fff" stroke-width="0.25" >40</text>
<text x="55.7" y="425.9" fill="#fff" font-size="10.6" text-anchor="middle" stroke="#fff" stroke-width="0.25" >28</text>
<text x="91.3" y="425.9" fill="#fff" font-size="10.6" text-anchor="middle" stroke="#fff" stroke-width="0.25" >29</text>
<text x="126.9" y="425.9" fill="#fff" font-size="10.6" text-anchor="middle" stroke="#fff" stroke-width="0.25" >30</text>
<text x="162.4" y="425.9" fill="#fff" font-size="10.6" text-anchor="middle" stroke="#fff" stroke-width="0.25" >1</text>
<text x="198.0" y="425.9" fill="#fff" font-size="10.6" text-anchor="middle" stroke="#fff" stroke-width="0.25" >4</text>
<text x="233.6" y="425.9" fill="#fff" font-size="10.6" text-anchor="middle" stroke="#fff" stroke-width="0.25" >5</text>
<text x="269.2" y="425.9" fill="#fff" font-size="10.6" text-anchor="middle" stroke="#fff" stroke-width="0.25" >6</text>
<text x="304.8" y="425.9" fill="#fff" font-size="10.6" text-anchor="middle" stroke="#fff" stroke-width="0.25" >7</text>
<text x="340.3" y="425.9" fill="#fff" font-size="10.6" text-anchor="middle" stroke="#fff" stroke-width="0.25" >8</text>
<text x="375.9" y="425.9" fill="#fff" font-size="10.6" text-anchor="middle" stroke="#fff" stroke-width="0.25" >11</text>
<text x="411.5" y="425.9" fill="#fff" font-size="10.6" text-anchor="middle" stroke="#fff" stroke-width="0.25" >12</text>
<text x="447.1" y="425.9" fill="#fff" font-size="10.6" text-anchor="middle" stroke="#fff" stroke-width="0.25" >13</text>
<text x="482.7" y="425.9" fill="#fff" font-size="10.6" text-anchor="middle" stroke="#fff" stroke-width="0.25" >14</text>
<text x="518.2" y="425.9" fill="#fff" font-size="10.6" text-anchor="middle" stroke="#fff" stroke-width="0.25" >15</text>
<text x="553.8" y="425.9" fill="#fff" font-size="10.6" text-anchor="middle" stroke="#fff" stroke-width="0.25" >18</text>
<text x="589.4" y="425.9" fill="#fff" font-size="10.6" text-anchor="middle" stroke="#fff" stroke-width="0.25" >19</text>
<text x="625.0" y="425.9" fill="#fff" font-size="10.6" text-anchor="middle" stroke="#fff" stroke-width="0.25" >20</text>
<text x="660.6" y="425.9" fill="#fff" font-size="10.6" text-anchor="middle" stroke="#fff" stroke-width="0.25" >21</text>
<text x="696.1" y="425.9" fill="#fff" font-size="10.6" text-anchor="middle" stroke="#fff" stroke-width="0.25" >22</text>
<text x="731.7" y="425.9" fill="#fff" font-size="10.6" text-anchor="middle" stroke="#fff" stroke-width="0.25" >25</text>
<text x="767.3" y="425.9" fill="#fff" font-size="10.6" text-anchor="middle" stroke="#fff" stroke-width="0.25" >26</text>
<text x="802.9" y="425.9" fill="#fff" font-size="10.6" text-anchor="middle" stroke="#fff" stroke-width="0.25" >27</text>
<text x="838.5" y="425.9" fill="#fff" font-size="10.6" text-anchor="middle" stroke="#fff" stroke-width="0.25" >28</text>
<text x="874.0" y="425.9" fill="#fff" font-size="10.6" text-anchor="middle" stroke="#fff" stroke-width="0.25" >29</text>
<rect x="17" y="40" width="276" height="12.5" fill="#3b424b"/>
<text x="16.5" y="51.3" fill="#1818e0" font-size="10.2">Exponential_Moving_Average</text>
<text x="156.2" y="51.3" fill="#dc202c" font-size="10.2">Exponential_Moving_Average</text>
<defs><linearGradient id="rb" x1="0" y1="0" x2="0" y2="1"><stop offset="0" stop-color="#f05560"/><stop offset="0.45" stop-color="#e8242e"/><stop offset="1" stop-color="#c8141e"/></linearGradient><linearGradient id="bb" x1="0" y1="0" x2="0" y2="1"><stop offset="0" stop-color="#4ab4e8"/><stop offset="0.45" stop-color="#1c8fd4"/><stop offset="1" stop-color="#1478b8"/></linearGradient></defs>
<rect x="16" y="39" width="31" height="22" fill="#f1f1f1"/>
<rect x="16" y="39" width="31" height="5" fill="#cfcfcf"/>
<rect x="20.5" y="47.5" width="9" height="9" rx="1.5" fill="url(#rb)" stroke="#b01822" stroke-width="1"/>
<rect x="33.5" y="47.5" width="9" height="9" rx="1.5" fill="url(#bb)" stroke="#1668a8" stroke-width="1"/>
<rect x="889" y="150" width="48" height="20.6" fill="#ffffff"/>
<text x="897.8" y="163.8" fill="#3f4554" font-size="10.7">1.2332</text>
<rect x="17.5" y="380.5" width="61.0" height="19" rx="2.5" fill="#5f7590" stroke="#a9bbd0" stroke-width="1"/>
<rect x="16.1" y="380" width="2" height="27" fill="#d4ecec"/>
<text x="24.0" y="393.8" fill="#ffffff" font-size="10.4" stroke="#fff" stroke-width="0.12" textLength="47.7">Апр 2020</text>
<rect x="163.3" y="380.5" width="62.5" height="19" rx="2.5" fill="#5f7590" stroke="#a9bbd0" stroke-width="1"/>
<rect x="161.9" y="380" width="2" height="27" fill="#d4ecec"/>
<text x="171.3" y="393.8" fill="#ffffff" font-size="10.4" stroke="#fff" stroke-width="0.12" textLength="49.2">Май 2020</text>
</svg>
</body></html>
